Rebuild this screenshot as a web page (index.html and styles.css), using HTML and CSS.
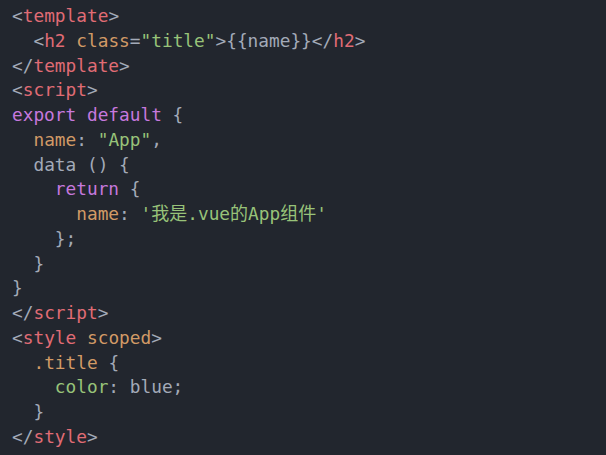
FILE: index.html
```html
<!DOCTYPE html>
<html>
<head>
<meta charset="utf-8">
<link rel="stylesheet" href="styles.css">
</head>
<body>
<pre class="code"><span class="p">&lt;</span><span class="t">template</span><span class="p">&gt;</span>
  <span class="p">&lt;</span><span class="t">h2</span> <span class="a">class</span><span class="p">=</span><span class="s">"title"</span><span class="p">&gt;{{name}}&lt;/</span><span class="t">h2</span><span class="p">&gt;</span>
<span class="p">&lt;/</span><span class="t">template</span><span class="p">&gt;</span>
<span class="p">&lt;</span><span class="t">script</span><span class="p">&gt;</span>
<span class="k">export</span> <span class="k">default</span> <span class="p">{</span>
  <span class="a">name</span><span class="p">:</span> <span class="s">"App"</span><span class="p">,</span>
  <span class="p">data () {</span>
    <span class="k">return</span> <span class="p">{</span>
      <span class="a">name</span><span class="p">:</span> <span class="s">'<span class="cjk">我是</span>.vue<span class="cjk">的</span>App<span class="cjk">组件</span>'</span>
    <span class="p">};</span>
  <span class="p">}</span>
<span class="p">}</span>
<span class="p">&lt;/</span><span class="t">script</span><span class="p">&gt;</span>
<span class="p">&lt;</span><span class="t">style</span> <span class="a">scoped</span><span class="p">&gt;</span>
  <span class="a">.title</span> <span class="p">{</span>
    <span class="s">color</span><span class="p">: blue;</span>
  <span class="p">}</span>
<span class="p">&lt;/</span><span class="t">style</span><span class="p">&gt;</span></pre>
</body>
</html>
```
FILE: styles.css
```css
html, body {
  margin: 0;
  padding: 0;
  background: #22262e;
  width: 606px;
  height: 455px;
  overflow: hidden;
}
.code {
  margin: 0;
  padding: 4px 0 0 12px;
  font-family: "DejaVu Sans Mono", "Noto Sans CJK SC", monospace;
  font-size: 17.8px;
  line-height: 24.75px;
  color: #a3aab8;
  white-space: pre;
}
.p { color: #a3aab8; }
.t { color: #e06c75; }
.a { color: #d19a66; }
.s { color: #98c379; }
.k { color: #c678dd; }
.cjk {
  font-family: "Noto Sans CJK SC", sans-serif;
  font-size: 18px;
  line-height: 1;
}
```
